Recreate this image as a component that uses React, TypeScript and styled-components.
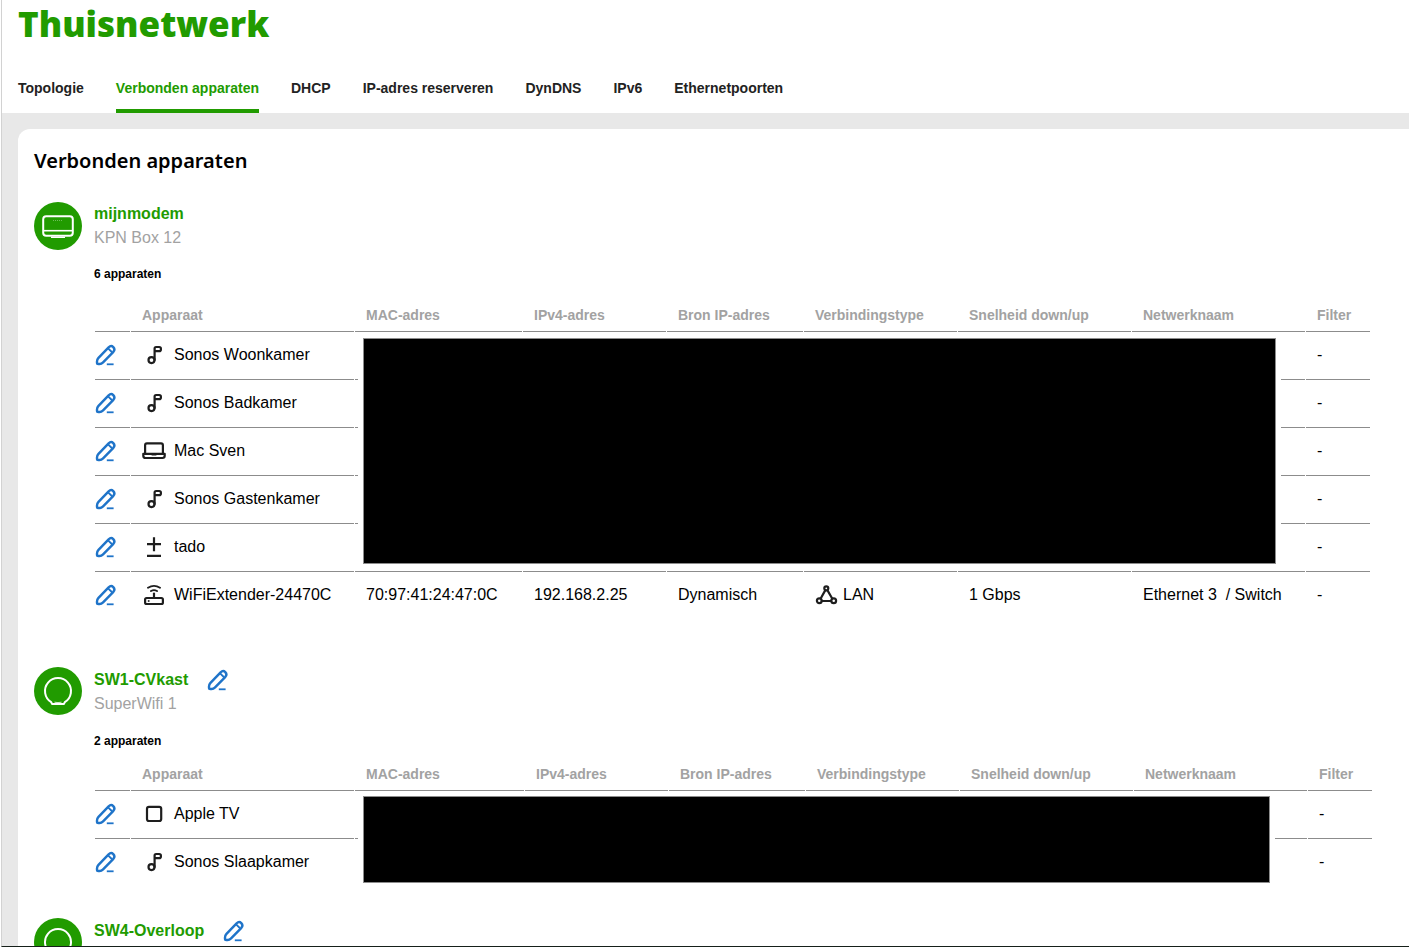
import React from 'react';
import styled, { createGlobalStyle } from 'styled-components';

const Global = createGlobalStyle`
  *, *::before, *::after { box-sizing: border-box; }
  body { margin: 0; background: #fff; color: #000; font: 16px/24px "Liberation Sans", Arial, sans-serif; }
`;
const GREEN = '#219b00';

const Page = styled.div`
  height: 100vh; overflow: hidden; display: flex; flex-direction: column;
  margin-left: 1px; border-left: 1px solid #d2d2d2; border-bottom: 1px solid #16201a;
`;
const Header = styled.header`padding: 0 16px; flex: none;`;
const Title = styled.h1`
  margin: 0; height: 72px; color: ${GREEN};
  font: 900 35px/48px "Noto Sans", "Open Sans", sans-serif;
`;
const Tabs = styled.nav`display: flex; gap: 32px;`;
const Tab = styled.a<{ $active?: boolean }>`
  display: block; height: 41px; line-height: 32px; font-size: 14px; font-weight: 700; text-decoration: none;
  white-space: nowrap;
  color: ${p => (p.$active ? GREEN : '#222')};
  border-bottom: 4px solid ${p => (p.$active ? GREEN : 'transparent')};
`;
const Body = styled.main`flex: 1; min-height: 0; background: #e8e8e8; padding: 16px 0 0 16px; display: flex; flex-direction: column;`;
const Card = styled.section`flex: 1 0 auto; background: #fff; border-radius: 12px 0 0 0; padding: 16px 0 16px 16px;`;
const CardTitle = styled.h2`margin: 0 0 25px; font: 600 20px/32px "Noto Sans", "Open Sans", sans-serif;`;

const Group = styled.section<{ $after: number }>`
  display: grid; grid-template-columns: 48px 1fr; column-gap: 12px; margin-bottom: ${p => p.$after}px;
`;
const Avatar = styled.div`
  width: 48px; height: 48px; border-radius: 50%; background: ${GREEN};
  svg { display: block; }
`;
const NameRow = styled.div<{ $editable?: boolean }>`
  display: flex; align-items: center; gap: 19px; height: 24px; margin-top: ${p => (p.$editable ? 1 : 0)}px;
`;
const Name = styled.h3`margin: 0; font-size: 16px; line-height: 24px; color: ${GREEN};`;
const Model = styled.p`margin: 0; color: #a2a2a2;`;
const Count = styled.p<{ $before: number; $after: number }>`
  margin: ${p => p.$before}px 0 ${p => p.$after}px; font-size: 12px; line-height: 16px; font-weight: 700;
`;
const IconButton = styled.button`
  display: block; width: 24px; height: 24px; padding: 0; border: 0; background: none; color: #1f74c9; cursor: pointer;
  svg { display: block; }
`;

const TableArea = styled.div<{ $end: number }>`position: relative; margin-right: ${p => p.$end}px;`;
const Table = styled.table`width: 100%; table-layout: fixed; border-collapse: separate; border-spacing: 1px 0;`;
const Th = styled.th`
  height: 33px; padding: 0 0 0 11px; text-align: left; white-space: nowrap;
  font-size: 14px; font-weight: 700; line-height: 32px; color: #a2a2a2; border-bottom: 1px solid #8c8c8c;
`;
const Td = styled.td`
  height: 48px; padding: 0 0 1px 11px; white-space: pre; border-bottom: 1px solid #8c8c8c;
  tr:last-child > & { border-bottom-color: transparent; }
`;
const EditTd = styled(Td)`padding-left: 0;`;
const Item = styled.div<{ $gap: number }>`
  display: flex; align-items: center; gap: ${p => p.$gap}px;
  svg { flex: none; color: #1e1e1e; }
`;
const Redaction = styled.div<{ $right: number; $top: number; $bottom: number }>`
  position: absolute; left: 269px; right: ${p => p.$right}px; top: ${p => p.$top}px; bottom: ${p => p.$bottom}px;
  background: #000; border: 1px solid #8c8c8c; box-shadow: 0 0 0 5px #fff;
`;

const svg = (children: React.ReactNode) => (
  <svg width="24" height="24" viewBox="0 0 24 24" fill="none" stroke="currentColor" strokeWidth="2.2" strokeLinecap="round" strokeLinejoin="round" aria-hidden="true">{children}</svg>
);
const icons = {
  music: svg(<><circle cx="9.500" cy="17.100" r="3" /><path d="M12.600 17.100V5.500Q12.600 4 14.100 4h3.100q1.700 0 1.700 1.700v.700q0 1.700-1.700 1.700H13" /></>),
  laptop: svg(<><path d="M3.100 14.500V6.200q0-1.800 1.800-1.800h14.200q1.800 0 1.800 1.800v8.300" /><path d="M1.300 14.800h21.400v2q0 2.200-2.200 2.200H3.500q-2.200 0-2.200-2.200z" /><path d="M10 15.300h4" /></>),
  plus: svg(<path d="M12 2.300v14M5 9.200h14M5 20.800h14" strokeLinecap="butt" />),
  router: svg(<><rect x="3.100" y="15" width="17.800" height="6" rx="1.500" /><path d="M12 10.500V15" /><path d="M9 8q3-1.700 6 0M6 4.800q6-3.800 12 0" strokeWidth="1.900" /><circle cx="6.500" cy="18" r=".5" strokeWidth="1" /></>),
  square: svg(<rect x="5" y="4.800" width="14.200" height="14.200" rx="2" />),
  lan: svg(<><circle cx="11.300" cy="5.300" r="2" /><circle cx="4.300" cy="17.700" r="2.400" /><circle cx="18.700" cy="17.700" r="2.400" /><path d="M10.200 7.400 5.700 15.500M12.500 7.400 17.200 15.500M6.700 18h9.500" /></>),
};
const Pencil = () => svg(
  <>
    <path d="M13.600 4.300q2.500-2.300 4.700-.2 2.200 2.300.1 4.700L8.100 19.300Q6.400 21 4.600 21H3.300Q2 21 2 19.700v-1.300q0-1.800 1.500-3.500z" strokeWidth="2.400" />
    <path d="M13.600 5.800l3.200 3.200" strokeWidth="1.800" />
    <path d="M11.800 21.300h6.800" strokeWidth="1.800" strokeLinecap="butt" />
  </>,
);

const Modem = () => (
  <svg width="48" height="48" fill="none" stroke="#fff" strokeWidth="2" aria-hidden="true">
    <rect x="9.200" y="14.200" width="29.600" height="19.600" rx="3" /><path d="M10 28.700h28" strokeWidth="1.600" /><path d="M17 35.300h14" strokeWidth="1.400" />
    <path d="M19 18.500h10" stroke="#6ebd59" strokeWidth="1" strokeDasharray="1 1" />
  </svg>
);
const Wifi = () => (
  <svg width="48" height="48" fill="none" stroke="#fff" strokeWidth="2" strokeLinejoin="round" aria-hidden="true">
    <path d="M17.200 35.200a13 13 0 1 1 13.600 0l-1 1.900H18.200z" /><path d="M20.500 35.200q3.500.8 7 0" strokeWidth=".8" />
  </svg>
);

type Kind = keyof typeof icons;
type Row = { icon: Kind; name: string; mac?: string; ip?: string; source?: string; link?: string; speed?: string; network?: string };
const headings = ['', 'Apparaat', 'MAC-adres', 'IPv4-adres', 'Bron IP-adres', 'Verbindingstype', 'Snelheid down/up', 'Netwerknaam', 'Filter'];

type DeviceTableProps = { rows: Row[]; macWidth: number; end: number; right: number; top: number; bottom: number };
function DeviceTable({ rows, macWidth, end, right, top, bottom }: DeviceTableProps) {
  const widths = [35, 223, macWidth, 143, 136, 153, 173, undefined, 64];
  return (
    <TableArea $end={end}>
      <Table>
        <colgroup>{widths.map((w, i) => <col key={i} width={w} />)}</colgroup>
        <thead><tr>{headings.map(h => <Th key={h} scope="col">{h}</Th>)}</tr></thead>
        <tbody>
          {rows.map(r => (
            <tr key={r.name}>
              <EditTd><IconButton aria-label={`${r.name} bewerken`}><Pencil /></IconButton></EditTd>
              <Td><Item $gap={8}>{icons[r.icon]}{r.name}</Item></Td>
              <Td>{r.mac}</Td><Td>{r.ip}</Td><Td>{r.source}</Td>
              <Td>{r.link && <Item $gap={4}>{icons.lan}{r.link}</Item>}</Td>
              <Td>{r.speed}</Td><Td>{r.network}</Td><Td>-</Td>
            </tr>
          ))}
        </tbody>
      </Table>
      <Redaction $right={right} $top={top} $bottom={bottom} />
    </TableArea>
  );
}

const modemRows: Row[] = [
  { icon: 'music', name: 'Sonos Woonkamer' },
  { icon: 'music', name: 'Sonos Badkamer' },
  { icon: 'laptop', name: 'Mac Sven' },
  { icon: 'music', name: 'Sonos Gastenkamer' },
  { icon: 'plus', name: 'tado' },
  { icon: 'router', name: 'WiFiExtender-24470C', mac: '70:97:41:24:47:0C', ip: '192.168.2.25', source: 'Dynamisch', link: 'LAN', speed: '1 Gbps', network: 'Ethernet 3  / Switch' },
];
const wifiRows: Row[] = [{ icon: 'square', name: 'Apple TV' }, { icon: 'music', name: 'Sonos Slaapkamer' }];
const tabs = ['Topologie', 'Verbonden apparaten', 'DHCP', 'IP-adres reserveren', 'DynDNS', 'IPv6', 'Ethernetpoorten'];

export default function App() {
  return (
    <>
      <Global />
      <Page>
        <Header>
          <Title>Thuisnetwerk</Title>
          <Tabs>{tabs.map((t, i) => <Tab key={t} href="#" $active={i === 1}>{t}</Tab>)}</Tabs>
        </Header>
        <Body>
          <Card>
            <CardTitle>Verbonden apparaten</CardTitle>
            <Group $after={47}>
              <Avatar><Modem /></Avatar>
              <div>
                <NameRow><Name>mijnmodem</Name></NameRow>
                <Model>KPN Box 12</Model>
                <Count $before={16} $after={17}>6 apparaten</Count>
                <DeviceTable rows={modemRows} macWidth={167} end={38} right={95} top={39} bottom={56} />
              </div>
            </Group>
            <Group $after={31}>
              <Avatar><Wifi /></Avatar>
              <div>
                <NameRow $editable><Name>SW1-CVkast</Name><IconButton aria-label="SW1-CVkast bewerken"><Pencil /></IconButton></NameRow>
                <Model>SuperWifi 1</Model>
                <Count $before={17} $after={9}>2 apparaten</Count>
                <DeviceTable rows={wifiRows} macWidth={169} end={36} right={103} top={38} bottom={4} />
              </div>
            </Group>
            <Group $after={0}>
              <Avatar><Wifi /></Avatar>
              <div><NameRow $editable><Name>SW4-Overloop</Name><IconButton aria-label="SW4-Overloop bewerken"><Pencil /></IconButton></NameRow></div>
            </Group>
          </Card>
        </Body>
      </Page>
    </>
  );
}
